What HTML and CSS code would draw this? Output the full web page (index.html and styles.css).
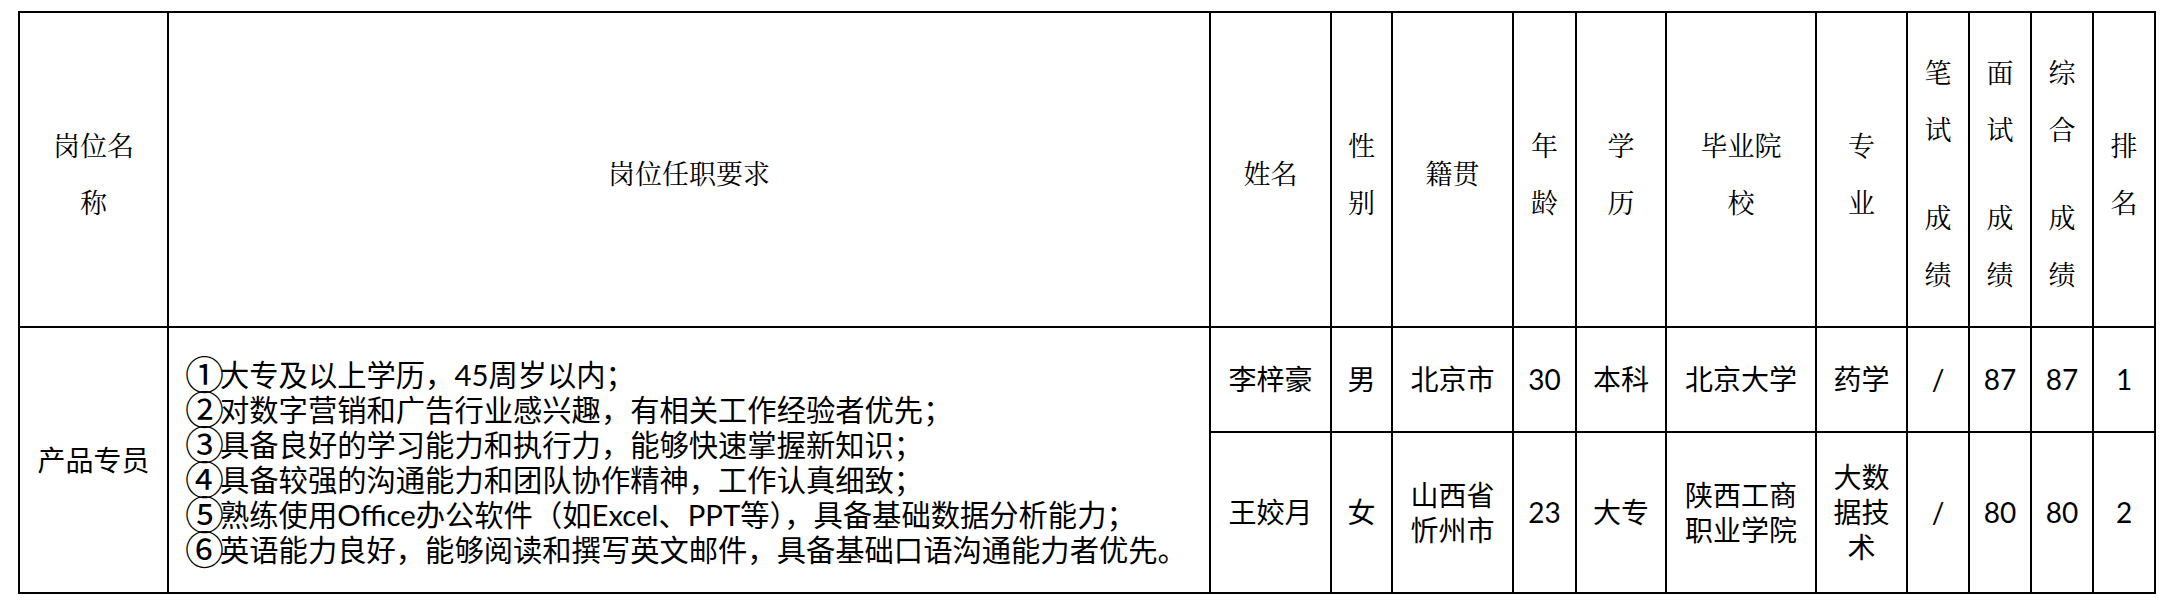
FILE: index.html
```html
<!DOCTYPE html>
<html lang="zh-CN">
<head>
<meta charset="utf-8">
<title>岗位成绩表</title>
<link rel="stylesheet" href="styles.css">
</head>
<body>
<div class="sheet">
  <div class="cell head">岗位名<br>称</div>
  <div class="cell head">岗位任职要求</div>
  <div class="cell head">姓名</div>
  <div class="cell head">性<br>别</div>
  <div class="cell head">籍贯</div>
  <div class="cell head">年<br>龄</div>
  <div class="cell head">学<br>历</div>
  <div class="cell head">毕业院<br>校</div>
  <div class="cell head">专<br>业</div>
  <div class="cell head"><div class="stack"><div>笔<br>试</div><div class="lower">成<br>绩</div></div></div>
  <div class="cell head"><div class="stack"><div>面<br>试</div><div class="lower">成<br>绩</div></div></div>
  <div class="cell head"><div class="stack"><div>综<br>合</div><div class="lower">成<br>绩</div></div></div>
  <div class="cell head">排<br>名</div>

  <div class="cell data post">产品专员</div>
  <div class="cell data reqs">
    <div class="req-list">
      <div class="req"><span class="num">①</span>大专及以上学历，45周岁以内；</div>
      <div class="req"><span class="num">②</span>对数字营销和广告行业感兴趣，有相关工作经验者优先；</div>
      <div class="req"><span class="num">③</span>具备良好的学习能力和执行力，能够快速掌握新知识；</div>
      <div class="req"><span class="num">④</span>具备较强的沟通能力和团队协作精神，工作认真细致；</div>
      <div class="req"><span class="num">⑤</span>熟练使用Office办公软件（如Excel、PPT等），具备基础数据分析能力；</div>
      <div class="req"><span class="num">⑥</span>英语能力良好，能够阅读和撰写英文邮件，具备基础口语沟通能力者优先。</div>
    </div>
  </div>

  <div class="cell data">李梓豪</div>
  <div class="cell data">男</div>
  <div class="cell data">北京市</div>
  <div class="cell data">30</div>
  <div class="cell data">本科</div>
  <div class="cell data">北京大学</div>
  <div class="cell data">药学</div>
  <div class="cell data">/</div>
  <div class="cell data">87</div>
  <div class="cell data">87</div>
  <div class="cell data">1</div>

  <div class="cell data">王姣月</div>
  <div class="cell data">女</div>
  <div class="cell data">山西省<br>忻州市</div>
  <div class="cell data">23</div>
  <div class="cell data">大专</div>
  <div class="cell data">陕西工商<br>职业学院</div>
  <div class="cell data">大数<br>据技<br>术</div>
  <div class="cell data">/</div>
  <div class="cell data">80</div>
  <div class="cell data">80</div>
  <div class="cell data">2</div>
</div>
</body>
</html>
```

FILE: styles.css
```css
html, body {
  margin: 0;
  padding: 0;
  background: #ffffff;
}

.sheet {
  display: grid;
  grid-template-columns: 147px 1040px 119px 59px 119px 61px 88px 148px 89px 60px 60px 60px 60px;
  grid-template-rows: 313px 103px 159px;
  gap: 2px;
  padding: 2px;
  background: #000000;
  width: max-content;
  margin: 11px 0 0 18px;
}

.cell {
  background: #ffffff;
  color: #000000;
  display: flex;
  align-items: center;
  justify-content: center;
  text-align: center;
  overflow: hidden;
}

.head {
  font-family: "Noto Serif CJK SC", "Noto Sans CJK SC", serif;
  font-size: 27px;
  line-height: 57px;
  padding-top: 6px;
  box-sizing: border-box;
}

.stack .lower {
  margin-top: 31px;
}

.data {
  font-family: Lato, "Noto Sans CJK SC", sans-serif;
  font-size: 28px;
  line-height: 35px;
  font-weight: 400;
}

.post,
.reqs {
  grid-row: 2 / span 2;
}

.reqs {
  justify-content: flex-start;
  text-align: left;
  padding-left: 19px;
  font-size: 29.3px;
}

.req {
  white-space: nowrap;
  height: 35px;
}

.num {
  font-family: "Noto Sans CJK SC", sans-serif;
  font-size: 39px;
  line-height: 35px;
  letter-spacing: -7px;
  margin-left: -3px;
  padding-right: 3px;
  vertical-align: -3px;
}
```
